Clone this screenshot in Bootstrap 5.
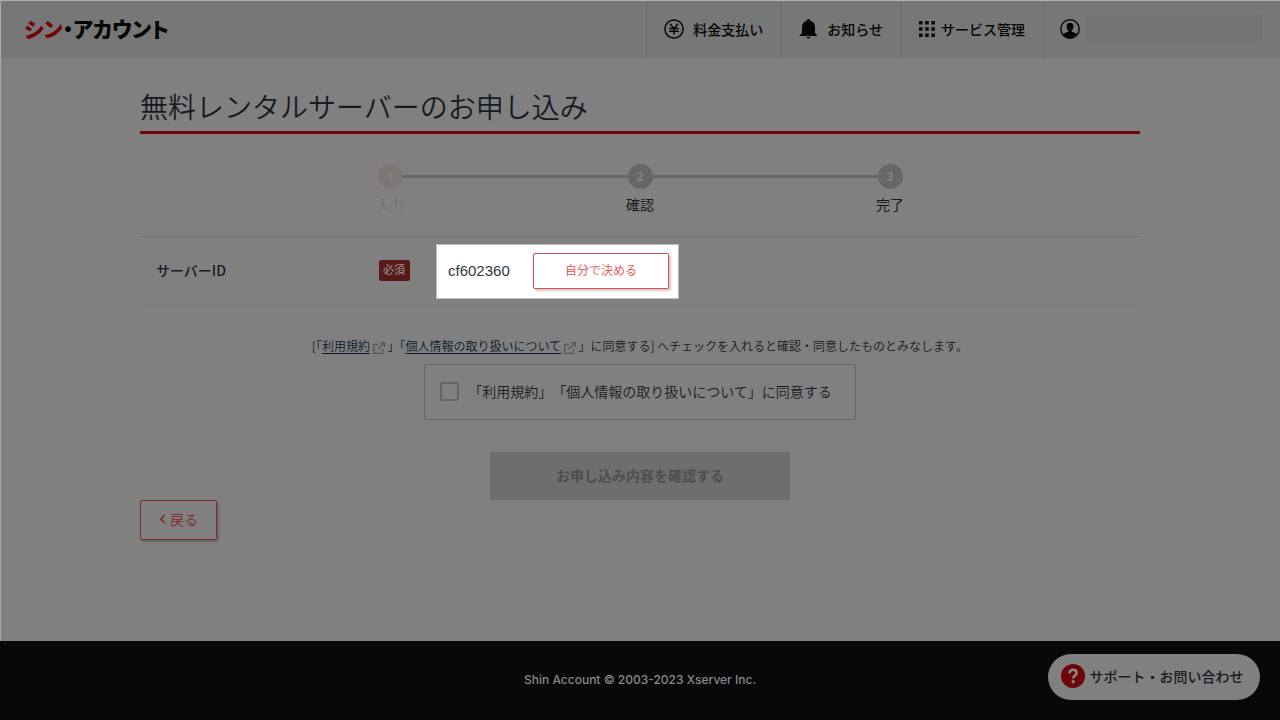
<!DOCTYPE html>
<html lang="ja">
<head>
<meta charset="utf-8">
<meta name="viewport" content="width=device-width, initial-scale=1">
<title>無料レンタルサーバーのお申し込み</title>
<link href="https://cdn.jsdelivr.net/npm/bootstrap@5.3.0/dist/css/bootstrap.min.css" rel="stylesheet">
<style>
body{font-family:"Liberation Sans","Noto Sans CJK JP",sans-serif;font-size:14px;line-height:20px;color:#181b1e;background:#808080}
body::before{content:"";position:absolute;left:0;top:0;width:1px;height:calc(100% - 79px);background:#a9a9a9}
button,input{font-family:inherit}
.jp-light{font-family:"Noto Sans CJK JP",sans-serif;font-weight:350}
.jp{font-family:"Noto Sans CJK JP",sans-serif}
.site-head{background:#777;border-top:1px solid #b0b0b0;height:58px}
.brand-logo{font-family:"Noto Sans CJK JP",sans-serif;font-weight:900;font-size:21px;line-height:28px;font-feature-settings:"palt";color:#050505;padding:0 0 4px 24px}
.brand-logo span{color:#730508}
.head-link{border-left:1px solid #6b6b6b;color:#060606;font-weight:500;font-family:"Noto Sans CJK JP",sans-serif;text-decoration:none;padding:0 18px 2px 17px;gap:9px;white-space:nowrap}
.head-link.tight{gap:6px}
.head-link.account{padding-left:16px;gap:6px}
.user-name{width:176px;height:27px;background:#727272}
.page-wrap{max-width:1000px;padding-top:29px}
.page-title{font-size:28px;line-height:38px;border-bottom:3px solid #6d060a;margin:0;padding-bottom:6px}
.steps{display:grid;grid-template-columns:repeat(3,250px);justify-content:center;list-style:none;margin:30px 0 22px;padding:0}
.steps li{position:relative;text-align:center}
.steps li+li::before{content:"";position:absolute;top:11px;right:calc(50% + 12px);width:226px;height:3px;background:#676767}
.dot{width:25px;height:25px;border-radius:50%;background:#676767;color:#828282;font:bold 12px/25px "Open Sans",sans-serif;margin:0 auto 5px}
.steps .current{color:#7a7272}
.current .dot{background:#7e7675;color:#858080}
.id-row{border-top:1px solid #747474;border-bottom:1px solid #747474;height:70px}
.id-label{width:296px;padding:0 26px 2px 16px}
.need{background:#581a18;color:#999;font-size:11px;line-height:18px;border-radius:2px;padding:0 5px 3px 4px}
.spot{background:#fff;border:1px solid #bcbcbc;width:243px;height:55px;padding:0 9px 0 11px}
.spot .server-id{color:#33373b;font-size:15px;font-family:"Liberation Sans",sans-serif}
.line-btn{border:1px solid #e24a4b;border-radius:2px;background:transparent;color:#e24a4b;box-shadow:2px 2px 2px rgba(0,0,0,.2)}
.decide{width:136px;height:36px;font-size:12px;padding:0 0 2px}
.back{width:77px;height:40px;border-color:#802729;color:#802729;font-size:14px;padding:0 0 3px}
.terms{font-size:12px;line-height:18px;margin:31px 0 9px;text-align:center}
.terms a{color:#0c1b2b;text-underline-offset:2px}
.agree-box{border:1px solid #666;border-radius:2px;height:56px;padding:0 23px 2px 15px;gap:9px;text-spacing-trim:space-all}
.agree-box input{appearance:none;width:19px;height:19px;border:2px solid #656565;border-radius:2px;margin:0;flex:none}
.agree-box input:checked{background:#581a18}
.submit-line{margin-top:32px}
.submit-btn{width:300px;height:48px;border:0;border-radius:2px;background:#6d6e70;color:#4c4e50;font-weight:700;padding:0 0 2px}
.site-foot{height:79px;background:#080808;color:#898989;font-family:Inter,"Liberation Sans",sans-serif;font-size:12px;font-weight:500;padding-bottom:2px}
.help{position:fixed;right:20px;bottom:20px;width:212px;height:46px;border-radius:23px;border:0;background:#808080;color:#181b1e;font-weight:500;gap:5px;white-space:nowrap;padding:0 4px 2px 0}
</style>
</head>
<body class="d-flex flex-column min-vh-100 position-relative">
<header class="site-head d-flex justify-content-between">
  <a href="#" class="brand-logo text-decoration-none align-self-center"><span>シン</span>・アカウント</a>
  <nav class="d-flex" aria-label="メインメニュー">
    <a href="#" class="head-link d-flex align-items-center">
      <svg width="20" height="20" viewBox="0 0 20 20" fill="none" stroke="currentColor" stroke-width="1.5"><circle cx="10" cy="10" r="9.1"/><path d="M6 4.800l4 5 4-5M10 9.600v6M5.200 9.400h9.600M5.200 12.200h9.600"/></svg>料金支払い</a>
    <a href="#" class="head-link d-flex align-items-center">
      <svg width="19" height="20" viewBox="0 0 19 20" fill="currentColor"><path d="M9.5 0C8.600 0 8 .6 8 1.400C5 2.200 3 4.500 3 8v4.500C3 14.500 2.200 15.300 .8 16.300V17h17.400v-.7c-1.400-1-2.200-1.800-2.200-3.800V8c0-3.500-2-5.800-5-6.600C11 .6 10.400 0 9.500 0zM7.200 18a2.400 2 0 0 0 4.600 0z"/></svg>お知らせ</a>
    <a href="#" class="head-link tight d-flex align-items-center">
      <svg width="16" height="16" viewBox="0 0 16 16" fill="currentColor"><path d="M0 0h3.500v3.500H0zM6.200 0h3.500v3.500H6.200zM12.400 0h3.500v3.500h-3.500zM0 6.200h3.500v3.500H0zM6.200 6.200h3.500v3.500H6.200zM12.400 6.200h3.500v3.500h-3.500zM0 12.400h3.500v3.500H0zM6.200 12.400h3.500v3.500H6.200zM12.400 12.400h3.500v3.500h-3.500z"/></svg>サービス管理</a>
    <a href="#" class="head-link account d-flex align-items-center" aria-label="アカウント">
      <svg width="20" height="20" viewBox="0 0 20 20"><circle cx="10" cy="10" r="9.200" fill="none" stroke="currentColor" stroke-width="1.400"/><path d="M10 3.800c-2.200 0-3.500 1.500-3.500 3.600 0 1.700.7 3.200 1.800 4.100v1.200c-2 .6-4.200 1.400-5.300 2.700 1.600 2.300 4.200 3.800 7 3.800s5.400-1.500 7-3.800c-1.100-1.300-3.300-2.100-5.300-2.700v-1.200c1.100-.9 1.800-2.400 1.800-4.100 0-2.100-1.300-3.600-3.500-3.600z" fill="currentColor"/></svg>
      <span class="user-name"></span></a>
  </nav>
</header>

<main class="container-fluid page-wrap px-0 flex-grow-1">
  <h1 class="page-title jp-light">無料レンタルサーバーのお申し込み</h1>
  <ol class="steps jp">
    <li class="current"><div class="dot">1</div>入力</li>
    <li><div class="dot">2</div>確認</li>
    <li><div class="dot">3</div>完了</li>
  </ol>
  <form>
    <div class="id-row d-flex align-items-center">
      <div class="id-label d-flex justify-content-between align-items-center jp"><span class="fw-medium">サーバーID</span><span class="need">必須</span></div>
      <div class="spot d-flex align-items-center justify-content-between">
        <span class="server-id">cf602360</span>
        <button type="button" class="line-btn decide jp-light">自分で決める</button>
      </div>
    </div>
    <p class="terms jp-light">[「<a href="#">利用規約</a> <svg width="12" height="12" viewBox="0 0 12 12" fill="none" stroke="#555" stroke-width="1.300"><path d="M5 2.500H.7v8.800h8.800V7M7 .7h4.300V5M11.200.8L4.800 7.200"/></svg> 」「<a href="#">個人情報の取り扱いについて</a> <svg width="12" height="12" viewBox="0 0 12 12" fill="none" stroke="#555" stroke-width="1.300"><path d="M5 2.500H.7v8.800h8.800V7M7 .7h4.300V5M11.200.8L4.800 7.200"/></svg> 」に同意する] へチェックを入れると確認・同意したものとみなします。</p>
    <div class="d-flex justify-content-center">
      <label class="agree-box d-flex align-items-center jp-light" for="agree"><input type="checkbox" id="agree">「利用規約」「個人情報の取り扱いについて」に同意する</label>
    </div>
    <div class="submit-line d-flex justify-content-center"><button type="submit" class="submit-btn jp" disabled>お申し込み内容を確認する</button></div>
    <button type="button" class="line-btn back jp-light d-flex align-items-center justify-content-center gap-1"><svg width="7" height="10" viewBox="0 0 7 10" fill="none" stroke="currentColor" stroke-width="1.600"><path d="M5.800 1L1.800 5l4 4"/></svg>戻る</button>
  </form>
</main>

<footer class="site-foot d-flex align-items-center justify-content-center">Shin Account © 2003-2023 Xserver Inc.</footer>
<button type="button" class="help jp d-flex align-items-center justify-content-center">
  <svg width="24" height="24" viewBox="0 0 24 24"><circle cx="12" cy="12" r="12" fill="#6d060a"/><path d="M8.600 9.300C8.600 7 10 5.800 12.100 5.800s3.500 1.200 3.500 3.100c0 2.600-3.400 2.700-3.400 5.600" fill="none" stroke="#898989" stroke-width="2.500"/><circle cx="12.200" cy="17.700" r="1.600" fill="#898989"/></svg>サポート・お問い合わせ</button>
<script src="https://cdn.jsdelivr.net/npm/bootstrap@5.3.0/dist/js/bootstrap.bundle.min.js"></script>
</body>
</html>
